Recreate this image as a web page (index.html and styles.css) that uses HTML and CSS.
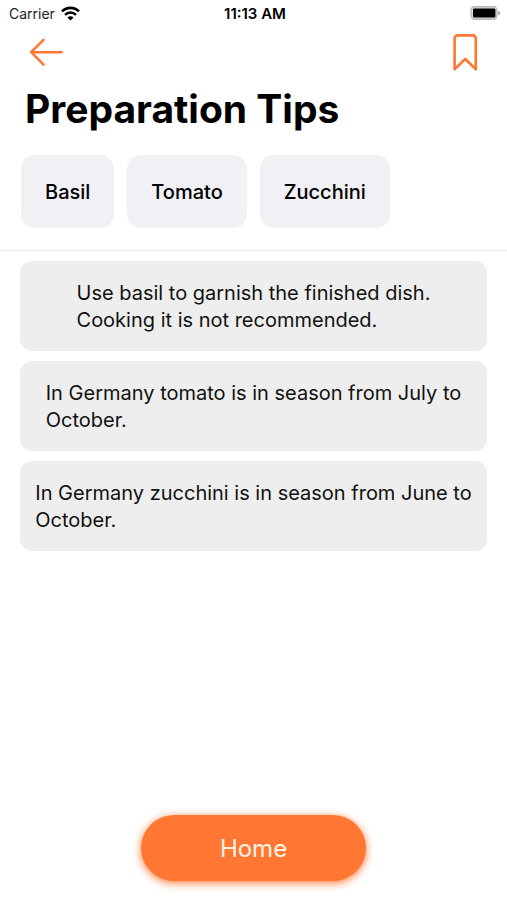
FILE: index.html
```
<!DOCTYPE html>
<html lang="en">
<head>
  <meta charset="UTF-8" />
  <meta name="viewport" content="width=device-width, initial-scale=1" />
  <title>Preparation Tips</title>
  <link rel="stylesheet" href="styles.css">
</head>
<body>
<div class="status-bar">
  <div class="carrier">
    <span>Carrier</span>
    <svg width="19" height="15" viewBox="0 0 19 15" aria-hidden="true">
      <path d="M1 5.4C5.8.6 13.2.6 18 5.4" fill="none" stroke="#000" stroke-width="2.7"/>
      <path d="M4 8.8c3.2-3 7.8-3 11 0" fill="none" stroke="#000" stroke-width="2.5"/>
      <path d="M6.4 11.4c1.8-1.7 4.4-1.7 6.2 0L9.5 14.6z"/>
    </svg>
  </div>
  <span class="time">11:13 AM</span>
  <svg class="battery" width="31" height="14" viewBox="0 0 31 14" aria-hidden="true">
    <rect x="1" y=".8" width="26" height="12.4" rx="3.6" fill="#ddd" stroke="#b8b8b8" stroke-width="1.4"/>
    <rect x="3" y="2.4" width="22.4" height="9.2" rx="1.4"/>
    <path d="M28.4 5c2.4.6 2.4 3.6 0 4.2z" fill="#999"/>
  </svg>
</div>

<header>
  <button class="icon-btn" aria-label="Back">
    <svg width="34" height="28" viewBox="0 0 34 28">
      <path d="M14.5 1.8L2.2 14.2l12.3 12.4M2.2 14.2h30.4" fill="none" stroke="#ff7733" stroke-width="2.6" stroke-linecap="round" stroke-linejoin="round"/>
    </svg>
  </button>
  <button class="icon-btn" aria-label="Bookmark">
    <svg width="26" height="38" viewBox="0 0 26 38">
      <path d="M2.6 5.4a3 3 0 0 1 3-3h15.2a3 3 0 0 1 3 3v30.8L13.2 26 2.6 36.2z" fill="none" stroke="#ff7733" stroke-width="2.6" stroke-linejoin="round"/>
    </svg>
  </button>
</header>

<h1>Preparation Tips</h1>

<div class="ingredients">
  <button class="chip">Basil</button>
  <button class="chip">Tomato</button>
  <button class="chip">Zucchini</button>
</div>

<main>
  <div class="tip"><p>Use basil to garnish the finished dish.<br>Cooking it is not recommended.</p></div>
  <div class="tip"><p>In Germany tomato is in season from July to<br>October.</p></div>
  <div class="tip"><p>In Germany zucchini is in season from June to<br>October.</p></div>
</main>

<footer>
  <a href="#" class="home-btn">Home</a>
</footer>
</body>
</html>
```
FILE: styles.css
```
:root { --accent:#ff7733; --chip:#f1f0f5; --tip:#eeeeee; }
* { box-sizing:border-box; }
body { margin:0; min-height:100vh; display:flex; flex-direction:column; font-family:Inter,"Liberation Sans",sans-serif; background:#fff; color:#000; }
.status-bar { display:grid; grid-template-columns:1fr auto 1fr; align-items:center; height:26px; padding:0 6px 0 9px; font-size:14px; }
.carrier { display:flex; align-items:center; gap:6px; color:#222; }
.time { font-size:15px; font-weight:600; }
.battery { justify-self:end; }
header { display:flex; justify-content:space-between; align-items:center; height:52px; padding:0 29px; }
.icon-btn { display:flex; padding:0; border:none; background:none; cursor:pointer; }
h1 { margin:0; padding:7px 25px 0; font-size:39px; line-height:48px; font-weight:700; }
.ingredients { display:flex; gap:13px; padding:22px 21px; border-bottom:1px solid #e9e9eb; }
.chip { height:73px; padding:0 24px; border:none; border-radius:14px; background:var(--chip); color:#000; font-family:inherit; font-size:20px; font-weight:500; cursor:pointer; }
main { display:flex; flex-direction:column; gap:10px; padding:10px 20px; }
.tip { display:flex; justify-content:center; padding:19px 12px 17px; border-radius:12px; background:var(--tip); }
.tip p { margin:0; font-size:20px; line-height:27px; color:#111; }
footer { display:flex; justify-content:center; margin-top:auto; padding-bottom:19px; }
.home-btn { padding:17px 79px 15px; border-radius:33px; background:var(--accent); box-shadow:0 2px 9px var(--accent); color:#fff3e6; font-size:24px; line-height:34px; text-decoration:none; }
```
